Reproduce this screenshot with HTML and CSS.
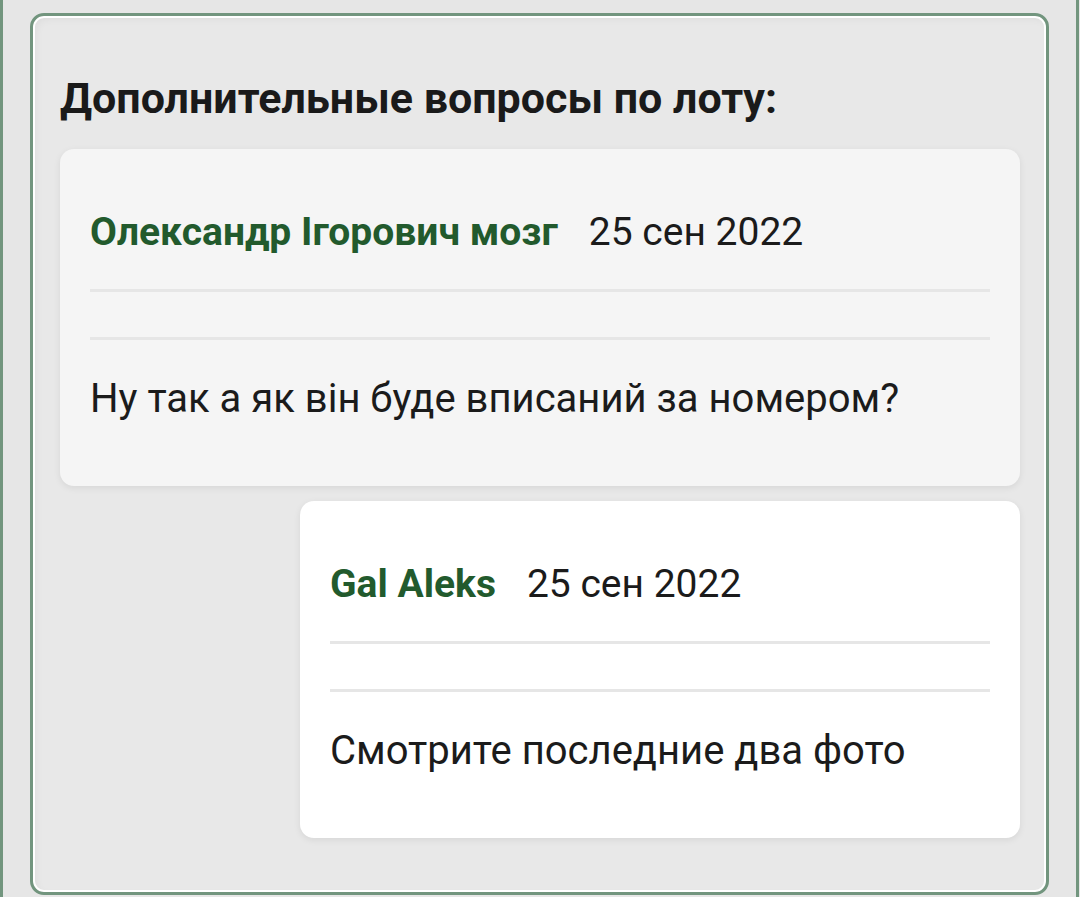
FILE: index.html
```html
<!DOCTYPE html>
<html lang="ru">
<head>
    <meta charset="UTF-8">
    <meta name="viewport" content="width=device-width, initial-scale=1.0">
    <title>Вопросы по лоту</title>
    <link rel="stylesheet" href="styles.css">
</head>
<body>
    <div class="page">
        <div class="questions">
            <h2>Дополнительные вопросы по лоту:</h2>

            <div class="comment">
                <div class="comment-head">
                    <span class="author">Олександр Ігорович мозг</span>
                    <span class="date">25 сен 2022</span>
                </div>
                <div class="divider"></div>
                <div class="divider second"></div>
                <p class="comment-text">Ну так а як він буде вписаний за номером?</p>
            </div>

            <div class="comment reply">
                <div class="comment-head">
                    <span class="author">Gal Aleks</span>
                    <span class="date">25 сен 2022</span>
                </div>
                <div class="divider"></div>
                <div class="divider second"></div>
                <p class="comment-text">Смотрите последние два фото</p>
            </div>
        </div>
    </div>
</body>
</html>
```

FILE: styles.css
```css
/* Reset */
* {
    margin: 0;
    padding: 0;
    box-sizing: border-box;
}

body {
    font-family: Roboto, 'Noto Sans', sans-serif;
    background-color: #e6e6e6;
    color: #1b1b1b;
    width: 1080px;
    height: 897px;
    overflow: hidden;
}

.page {
    width: 1079px;
    height: 897px;
    border-left: 3px solid #72957e;
    border-right: 3px solid #72957e;
    padding: 13px 27px 0;
}

.questions {
    height: 882px;
    border: 3px solid #72957e;
    border-radius: 14px;
    background-color: #e8e8e8;
    box-shadow: inset 0 0 0 2px #ffffff, inset 3px 3px 8px rgba(0, 0, 0, 0.05);
    padding: 58px 26px 0 27px;
}

h2 {
    font-size: 43px;
    font-weight: 700;
    line-height: 49px;
    color: #1a1a1a;
    margin-bottom: 26px;
}

.comment {
    background-color: #f5f5f5; /* light grey for questions */
    border-radius: 14px;
    box-shadow: 0 2px 7px rgba(0, 0, 0, 0.08);
    padding: 60px 30px 64px;
}

.reply {
    background-color: #ffffff; /* white for answers */
    margin-top: 15px;
    margin-left: 240px;
}

.comment-head {
    display: flex;
    gap: 31px;
    font-size: 39px;
    line-height: 46px;
}

.author {
    font-weight: 700;
    color: #225a2d;
}

.date {
    color: #1b1b1b;
}

.divider {
    height: 3px;
    background-color: #e6e6e6;
    margin-top: 34px;
}

.divider.second {
    margin-top: 45px;
}

.comment-text {
    font-size: 40px;
    line-height: 46px;
    margin-top: 36px;
}
```
